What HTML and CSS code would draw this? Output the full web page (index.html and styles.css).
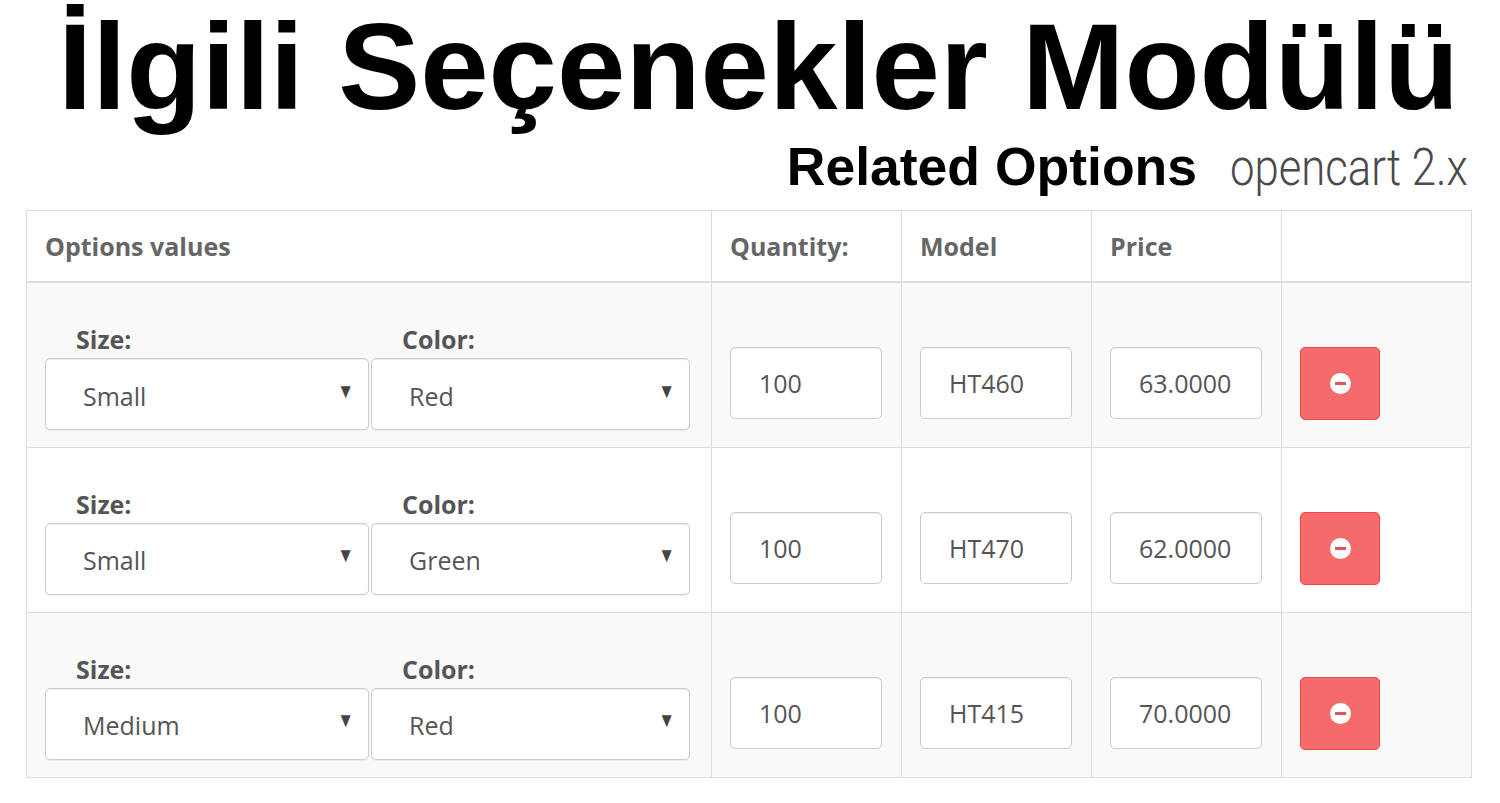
FILE: index.html
```html
<!DOCTYPE html>
<html lang="tr">
<head>
<meta charset="utf-8">
<title>İlgili Seçenekler Modülü</title>
<link rel="stylesheet" href="styles.css">
</head>
<body>
<header class="hero">
  <h1 class="title">İlgili Seçenekler Modülü</h1>
  <div class="subtitle">
    <span class="sub-main">Related Options</span>
    <span class="sub-oc"><span class="sub-oc-text">opencart 2.x</span></span>
  </div>
</header>

<table class="ro-table">
  <colgroup>
    <col class="col-opt">
    <col class="col-num">
    <col class="col-num">
    <col class="col-num">
    <col class="col-num">
  </colgroup>
  <thead>
    <tr>
      <th>Options values</th>
      <th>Quantity:</th>
      <th>Model</th>
      <th>Price</th>
      <th></th>
    </tr>
  </thead>
  <tbody>
    <tr class="odd">
      <td class="c-opt">
        <div class="opt-pair">
          <div class="opt-group g1"><div class="opt-label">Size:</div><div class="sel"><span>Small</span><span class="caret">▼</span></div></div>
          <div class="opt-group g2"><div class="opt-label">Color:</div><div class="sel"><span>Red</span><span class="caret">▼</span></div></div>
        </div>
      </td>
      <td class="c-num"><div class="inp">100</div></td>
      <td class="c-num"><div class="inp">HT460</div></td>
      <td class="c-num"><div class="inp">63.0000</div></td>
      <td class="c-num"><button class="btn-del" type="button"><span class="minus-circle"></span></button></td>
    </tr>
    <tr class="even">
      <td class="c-opt">
        <div class="opt-pair">
          <div class="opt-group g1"><div class="opt-label">Size:</div><div class="sel"><span>Small</span><span class="caret">▼</span></div></div>
          <div class="opt-group g2"><div class="opt-label">Color:</div><div class="sel"><span>Green</span><span class="caret">▼</span></div></div>
        </div>
      </td>
      <td class="c-num"><div class="inp">100</div></td>
      <td class="c-num"><div class="inp">HT470</div></td>
      <td class="c-num"><div class="inp">62.0000</div></td>
      <td class="c-num"><button class="btn-del" type="button"><span class="minus-circle"></span></button></td>
    </tr>
    <tr class="odd">
      <td class="c-opt">
        <div class="opt-pair">
          <div class="opt-group g1"><div class="opt-label">Size:</div><div class="sel"><span>Medium</span><span class="caret">▼</span></div></div>
          <div class="opt-group g2"><div class="opt-label">Color:</div><div class="sel"><span>Red</span><span class="caret">▼</span></div></div>
        </div>
      </td>
      <td class="c-num"><div class="inp">100</div></td>
      <td class="c-num"><div class="inp">HT415</div></td>
      <td class="c-num"><div class="inp">70.0000</div></td>
      <td class="c-num"><button class="btn-del" type="button"><span class="minus-circle"></span></button></td>
    </tr>
  </tbody>
</table>
</body>
</html>
```
FILE: styles.css
```css
html, body {
  margin: 0;
  padding: 0;
  background: #fff;
}
body {
  width: 1500px;
  height: 803px;
  overflow: hidden;
  font-family: "Open Sans", "Liberation Sans", sans-serif;
  color: #555;
}

.hero {
  display: flex;
  flex-direction: column;
}
.title {
  margin: 0;
  padding-left: 58px;
  font-family: "Liberation Sans", Arial, sans-serif;
  font-weight: 700;
  font-size: 123px;
  line-height: 134px;
  color: #000;
  white-space: nowrap;
}
.subtitle {
  display: flex;
  justify-content: flex-end;
  align-items: baseline;
  height: 60px;
  margin-top: 3px;
  padding-right: 32px;
  margin-bottom: 13px;
}
.sub-main {
  font-family: "Liberation Sans", Arial, sans-serif;
  font-weight: 700;
  font-size: 53.5px;
  line-height: 60px;
  color: #000;
}
.sub-oc {
  display: inline-block;
  margin-left: 33px;
  width: 238px;
  font-family: Roboto, "DejaVu Sans", sans-serif;
  font-weight: 300;
  font-size: 52px;
  line-height: 60px;
  color: #4a4a4a;
  white-space: nowrap;
}
.sub-oc-text {
  display: inline-block;
  transform: scaleX(0.84);
  transform-origin: left center;
}

.ro-table {
  margin-left: 26px;
  width: 1445px;
  border-collapse: collapse;
  table-layout: fixed;
  border: 1px solid #ddd;
}
.col-opt { width: 685px; }
.col-num { width: 190px; }

.ro-table th,
.ro-table td {
  border: 1px solid #ddd;
  padding: 0;
  text-align: left;
}

.ro-table thead th {
  height: 70px;
  border-bottom: 2px solid #ddd;
  padding: 0 18px;
  font-size: 25px;
  font-weight: 700;
  color: #666;
  vertical-align: middle;
  background: #fff;
  white-space: nowrap;
}

.ro-table tbody td {
  height: 165px;
  vertical-align: top;
  box-sizing: border-box;
}
.ro-table tbody tr.odd td { background: #f9f9f9; }
.ro-table tbody tr.even td { background: #fff; }

.ro-table td.c-opt {
  padding: 40px 20px 0 18px;
}
.opt-pair {
  display: flex;
  gap: 2px;
}
.opt-group.g1 { width: 324px; }
.opt-group.g2 { width: 319px; }
.opt-label {
  padding-left: 31px;
  font-size: 25px;
  font-weight: 700;
  line-height: 32px;
  margin-bottom: 3px;
  color: #555;
}
.sel {
  display: flex;
  justify-content: space-between;
  align-items: center;
  box-sizing: border-box;
  height: 72px;
  padding: 0 14px 0 37px;
  border: 1px solid #ccc;
  border-radius: 5px;
  background: #fff;
  box-shadow: inset 0 1px 1px rgba(0,0,0,.075), 0 1px 1px rgba(0,0,0,.05);
  font-size: 25px;
  color: #555;
}
.sel > span:first-child {
  padding-top: 3px;
}
.sel .caret {
  display: inline-block;
  font-size: 17px;
  color: #444;
  margin-top: -8px;
  transform: scaleY(1.2);
}

.ro-table td.c-num {
  padding: 64px 18px 0 18px;
}
.inp {
  display: flex;
  align-items: center;
  box-sizing: border-box;
  width: 152px;
  height: 72px;
  padding-left: 28px;
  border: 1px solid #ccc;
  border-radius: 5px;
  background: #fff;
  box-shadow: inset 0 1px 1px rgba(0,0,0,.075);
  font-size: 25px;
  color: #555;
}

.btn-del {
  display: flex;
  align-items: center;
  justify-content: center;
  width: 80px;
  height: 73px;
  padding: 0;
  border: 1px solid #f24545;
  border-radius: 5px;
  background: #f56b6b;
  cursor: pointer;
}
.minus-circle {
  position: relative;
  display: block;
  width: 21px;
  height: 21px;
  border-radius: 50%;
  background: #fff;
}
.minus-circle::after {
  content: "";
  position: absolute;
  left: 5px;
  top: 9px;
  width: 11px;
  height: 3px;
  background: #e05555;
}
```
